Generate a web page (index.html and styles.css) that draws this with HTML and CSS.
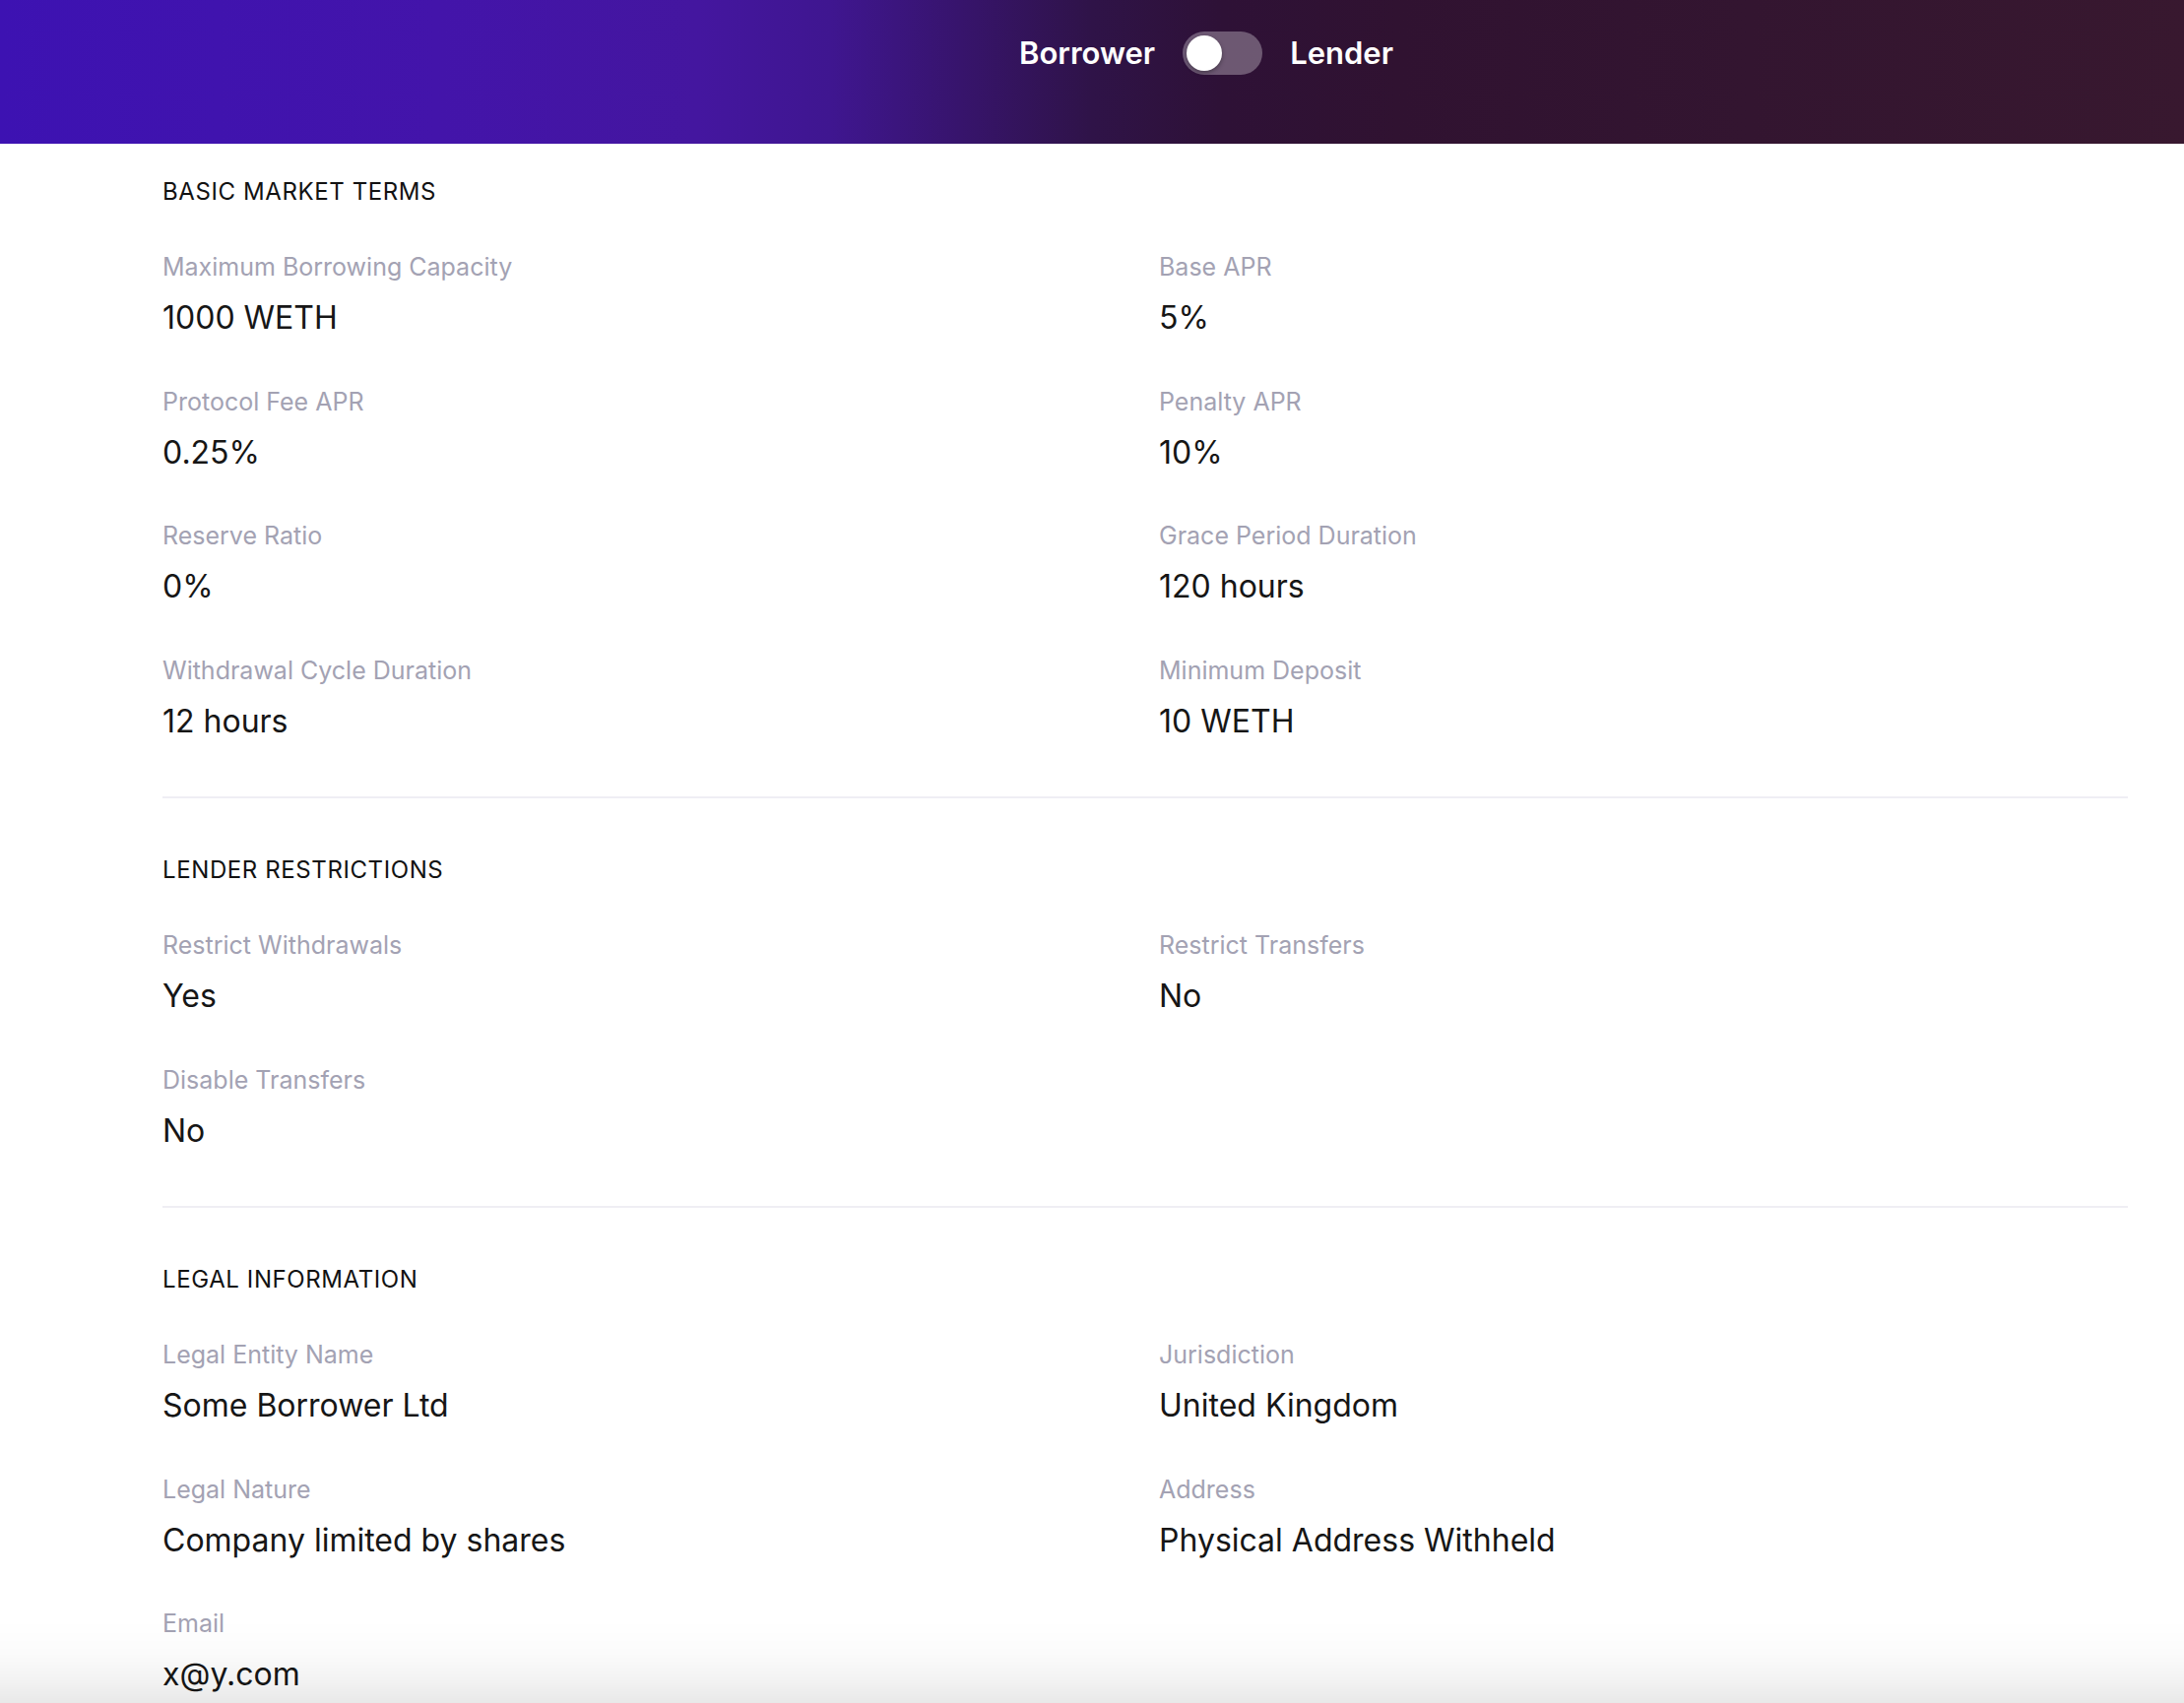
FILE: index.html
```html
<!DOCTYPE html>
<html lang="en">
<head>
<meta charset="utf-8">
<title>Market Terms</title>
<link rel="stylesheet" href="styles.css">
</head>
<body>
<header class="topbar">
  <div class="role-switch">
    <span class="role-label">Borrower</span>
    <span class="toggle"><span class="toggle-thumb"></span></span>
    <span class="role-label">Lender</span>
  </div>
</header>
<main class="content">
  <section class="section section-first">
    <h2 class="section-title">BASIC MARKET TERMS</h2>
    <div class="grid">
      <div class="item"><div class="label">Maximum Borrowing Capacity</div><div class="value">1000 WETH</div></div>
      <div class="item"><div class="label">Base APR</div><div class="value">5%</div></div>
      <div class="item"><div class="label">Protocol Fee APR</div><div class="value">0.25%</div></div>
      <div class="item"><div class="label">Penalty APR</div><div class="value">10%</div></div>
      <div class="item"><div class="label">Reserve Ratio</div><div class="value">0%</div></div>
      <div class="item"><div class="label">Grace Period Duration</div><div class="value">120 hours</div></div>
      <div class="item"><div class="label">Withdrawal Cycle Duration</div><div class="value">12 hours</div></div>
      <div class="item"><div class="label">Minimum Deposit</div><div class="value">10 WETH</div></div>
    </div>
  </section>
  <section class="section">
    <h2 class="section-title">LENDER RESTRICTIONS</h2>
    <div class="grid">
      <div class="item"><div class="label">Restrict Withdrawals</div><div class="value">Yes</div></div>
      <div class="item"><div class="label">Restrict Transfers</div><div class="value">No</div></div>
      <div class="item"><div class="label">Disable Transfers</div><div class="value">No</div></div>
    </div>
  </section>
  <section class="section section-last">
    <h2 class="section-title">LEGAL INFORMATION</h2>
    <div class="grid">
      <div class="item"><div class="label">Legal Entity Name</div><div class="value">Some Borrower Ltd</div></div>
      <div class="item"><div class="label">Jurisdiction</div><div class="value">United Kingdom</div></div>
      <div class="item"><div class="label">Legal Nature</div><div class="value">Company limited by shares</div></div>
      <div class="item"><div class="label">Address</div><div class="value">Physical Address Withheld</div></div>
      <div class="item"><div class="label">Email</div><div class="value">x@y.com</div></div>
    </div>
  </section>
</main>
<div class="bottom-fade"></div>
</body>
</html>
```
FILE: styles.css
```css
html, body {
  margin: 0;
  padding: 0;
  background: #ffffff;
  font-family: Inter, "Noto Sans", "Liberation Sans", sans-serif;
  color: #141414;
  overflow: hidden;
}

.topbar {
  height: 146px;
  box-sizing: border-box;
  padding: 32px 0 0 232px;
  background: linear-gradient(90deg, #3d12b2 0%, #4314aa 20%, #44169f 32%, #3f1690 38%, #37146c 44%, #2f1348 50%, #2e1136 56%, #301231 64%, #331530 80%, #38182f 100%);
}

.role-switch {
  display: flex;
  justify-content: center;
  align-items: center;
  gap: 28px;
  height: 44px;
}

.role-label {
  color: #ffffff;
  font-size: 31px;
  font-weight: 600;
  line-height: 44px;
}

.toggle {
  display: flex;
  align-items: center;
  width: 81px;
  height: 44px;
  box-sizing: border-box;
  padding: 0 4px;
  border-radius: 22px;
  background: rgba(255, 255, 255, 0.3);
}

.toggle-thumb {
  width: 36px;
  height: 36px;
  border-radius: 50%;
  background: #ffffff;
  box-shadow: 0 2px 4px rgba(0, 0, 0, 0.35);
}

.content {
  padding: 0 57px 0 165px;
}

.section {
  padding: 57px 0 56.5px;
  border-bottom: 2px solid #efeef4;
}

.section-first {
  padding-top: 33px;
}

.section-last {
  border-bottom: none;
}

.section-title {
  margin: 0;
  font-size: 24px;
  font-weight: 400;
  letter-spacing: 0.6px;
  line-height: 32px;
  color: #121212;
}

.grid {
  display: grid;
  grid-template-columns: 1fr 1fr;
  column-gap: 28px;
  row-gap: 48.5px;
  margin-top: 44px;
}

.label {
  font-size: 25px;
  line-height: 32px;
  color: #a3a2b3;
}

.value {
  margin-top: 16px;
  font-size: 32px;
  line-height: 40px;
  color: #161616;
}

.bottom-fade {
  position: fixed;
  left: 0;
  right: 0;
  bottom: 0;
  height: 84px;
  pointer-events: none;
  background: linear-gradient(180deg, rgba(0, 0, 0, 0) 0%, rgba(0, 0, 0, 0.015) 40%, rgba(0, 0, 0, 0.05) 75%, rgba(0, 0, 0, 0.09) 100%);
}
```
